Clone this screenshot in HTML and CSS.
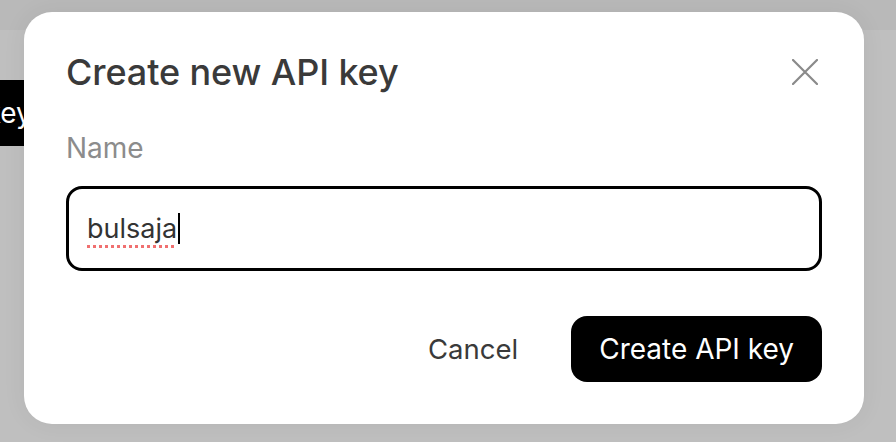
FILE: index.html
```html
<!DOCTYPE html>
<html>
<head>
<meta charset="utf-8">
<link rel="stylesheet" href="styles.css">
</head>
<body>
<div class="page">
  <div class="page-header"></div>
  <div class="page-toolbar">
    <button class="page-btn">Create API key</button>
  </div>
</div>
<div class="overlay">
  <div class="modal">
    <div class="modal-head">
      <h2 class="modal-title">Create new API key</h2>
      <button class="close" aria-label="Close">
        <svg width="26" height="26" viewBox="0 0 26 26"><path d="M1 1 L25 25 M25 1 L1 25" stroke="#8a8a8a" stroke-width="2.2" stroke-linecap="round" fill="none"/></svg>
      </button>
    </div>
    <label class="field-label">Name</label>
    <div class="input"><span class="input-text">bulsaja</span><span class="caret"></span></div>
    <div class="actions">
      <button class="btn-cancel">Cancel</button>
      <button class="btn-primary">Create API key</button>
    </div>
  </div>
</div>
</body>
</html>
```
FILE: styles.css
```css
* { box-sizing: border-box; }
html, body { margin: 0; padding: 0; }
body {
  width: 896px;
  height: 442px;
  overflow: hidden;
  background: #bfbfbf;
  font-family: "Inter", "Liberation Sans", sans-serif;
  position: relative;
}
.page { height: 442px; display: flex; flex-direction: column; }
.page-header { height: 30px; background: #b9b9b9; }
.page-toolbar { padding-top: 50px; display: flex; }
.page-btn {
  flex: none;
  margin-left: -191px;
  height: 66px;
  padding: 0 28px;
  border: none;
  border-radius: 16px;
  background: #000;
  color: #fff;
  font-family: inherit;
  font-size: 28px;
  white-space: nowrap;
}
.overlay {
  position: absolute;
  inset: 0;
}
.modal {
  position: absolute;
  left: 24px;
  top: 12px;
  width: 840px;
  height: 412px;
  background: #fff;
  border-radius: 28px;
  padding: 38px 42px 0 42px;
  box-shadow: 0 0 24px rgba(0,0,0,0.06);
  display: flex;
  flex-direction: column;
}
.modal-head {
  display: flex;
  justify-content: space-between;
  align-items: center;
  height: 44px;
}
.modal-title {
  margin: 0;
  font-size: 36px;
  font-weight: 500;
  color: #3a3a3a;
  letter-spacing: -0.1px;
  line-height: 44px;
}
.close {
  border: none;
  background: none;
  padding: 0;
  margin-right: 4px;
  width: 26px;
  height: 26px;
  display: flex;
}
.field-label {
  margin-top: 37px;
  font-size: 28px;
  color: #8c8c8c;
  line-height: 34px;
}
.input {
  margin-top: 21px;
  height: 85px;
  border: 3px solid #000;
  border-radius: 16px;
  padding: 0 18px;
  display: flex;
  align-items: center;
}
.input-text {
  font-size: 27px;
  color: #333;
  text-decoration: underline dotted #f07070;
  text-decoration-thickness: 3px;
  text-underline-offset: 7px;
}
.caret {
  width: 2px;
  height: 31px;
  background: #000;
  margin-left: 1px;
}
.actions {
  margin-top: 45px;
  display: flex;
  justify-content: flex-end;
  align-items: center;
  gap: 53px;
}
.btn-cancel {
  border: none;
  background: none;
  padding: 0;
  font-family: inherit;
  font-size: 27.5px;
  color: #3a3a3a;
}
.btn-primary {
  height: 66px;
  padding: 0 28px;
  border: none;
  border-radius: 16px;
  background: #000;
  color: #fff;
  font-family: inherit;
  font-size: 28px;
}
```
